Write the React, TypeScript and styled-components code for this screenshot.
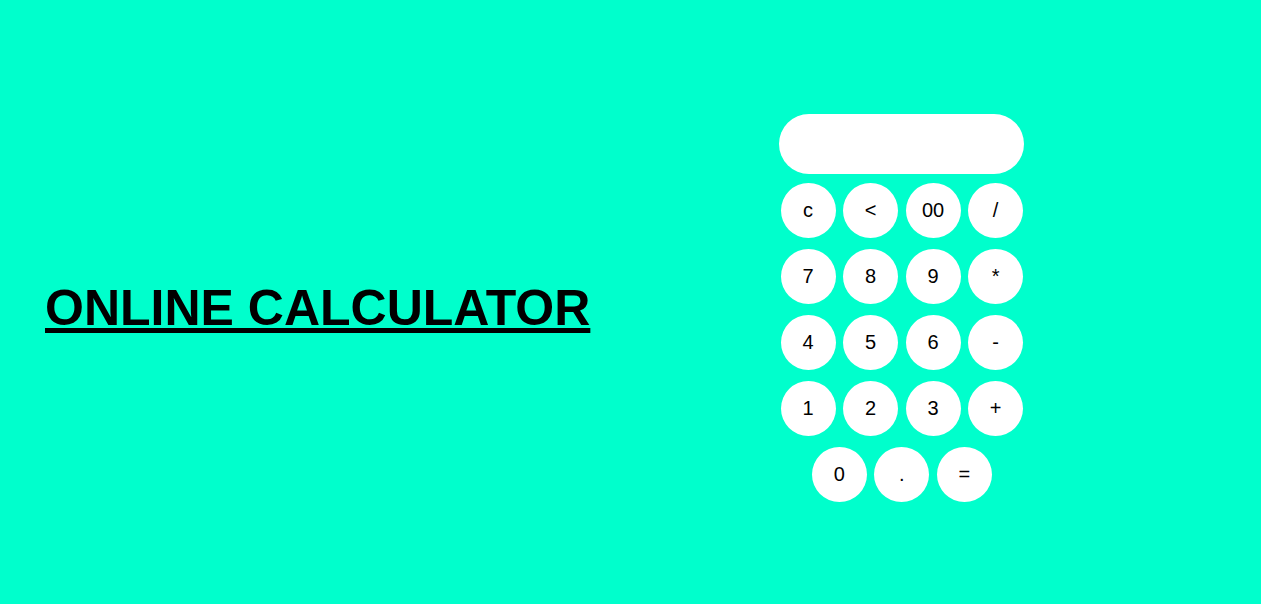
import React from "react";
import styled, { createGlobalStyle } from "styled-components";

const GlobalStyle = createGlobalStyle`
  html, body {
    margin: 0;
    padding: 0;
    background: #00ffcc;
    overflow: hidden;
  }
  * { box-sizing: border-box; }
`;

const Page = styled.main`
  display: flex;
  align-items: center;
  min-height: 100vh;
  padding-top: 12px;
  padding-left: 45px;
  gap: 189px;
  background: #00ffcc;
  font-family: "Liberation Sans", Arial, sans-serif;
`;

const Title = styled.h1`
  margin: 0;
  font-family: "Liberation Sans", Arial, sans-serif;
  font-weight: bold;
  font-size: 50px;
  line-height: normal;
  color: #000;
  text-decoration: underline;
  white-space: nowrap;
`;

const Calculator = styled.div`
  display: flex;
  flex-direction: column;
  align-items: center;
  width: 245px;
`;

const Display = styled.div`
  width: 245px;
  height: 60px;
  border-radius: 30px;
  background: #fff;
  margin-bottom: 9px;
`;

const Keys = styled.div`
  display: flex;
  flex-direction: column;
  gap: 11px;
`;

const Row = styled.div`
  display: flex;
  justify-content: center;
  gap: 7.5px;
`;

const Key = styled.button`
  width: 55px;
  height: 55px;
  border: none;
  border-radius: 50%;
  background: #fff;
  color: #000;
  padding: 0;
  font-family: "Liberation Sans", Arial, sans-serif;
  font-size: 20px;
  display: flex;
  align-items: center;
  justify-content: center;
  cursor: pointer;
`;

const rows: string[][] = [
  ["c", "<", "00", "/"],
  ["7", "8", "9", "*"],
  ["4", "5", "6", "-"],
  ["1", "2", "3", "+"],
  ["0", ".", "="],
];

export default function App() {
  return (
    <>
      <GlobalStyle />
      <Page>
        <Title>ONLINE CALCULATOR</Title>
        <Calculator>
          <Display />
          <Keys>
            {rows.map((r, i) => (
              <Row key={i}>
                {r.map((k) => (
                  <Key key={k}>{k}</Key>
                ))}
              </Row>
            ))}
          </Keys>
        </Calculator>
      </Page>
    </>
  );
}
